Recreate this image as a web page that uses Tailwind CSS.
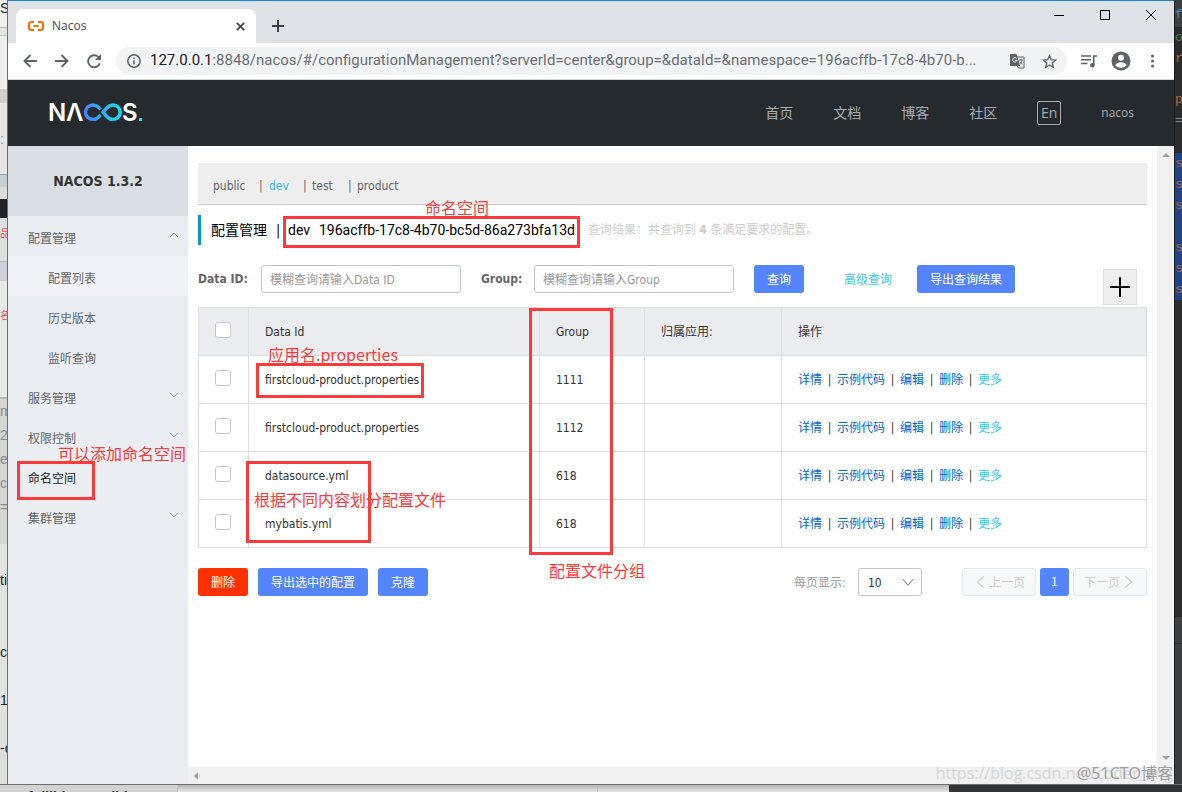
<!DOCTYPE html>
<html lang="zh-CN">
<head>
<meta charset="utf-8">
<meta name="viewport" content="width=device-width, initial-scale=1">
<title>Nacos</title>
<script src="https://cdn.jsdelivr.net/npm/@tailwindcss/browser@4"></script>
</head>
<body class="bg-[#3c3f41] text-xs text-[#333] font-['DejaVu_Sans_Condensed','Noto_Sans_CJK_SC',sans-serif]">
<svg class="hidden">
  <symbol id="down" viewBox="0 0 10 6"><path d="M1 .8 5 4.8 9 .8" fill="none" stroke="currentColor" stroke-width="1"/></symbol>
  <symbol id="up" viewBox="0 0 10 6"><path d="M1 5 5 1 9 5" fill="none" stroke="currentColor" stroke-width="1"/></symbol>
</svg>
<div class="grid h-screen grid-cols-[8px_minmax(0,1fr)_8px] grid-rows-[minmax(0,1fr)_8px] overflow-hidden">

  <!-- Window behind, left edge -->
  <div class="flex flex-col overflow-hidden border-r border-[#6e6e6e] bg-[#e6e6e6] font-['Liberation_Sans',sans-serif] text-sm leading-6 text-[#222]" aria-hidden="true">
    <div class="h-[28px] shrink-0 border-b border-[#bbb] bg-[#f0f0f0] leading-4">S</div>
    <div class="h-[8px] shrink-0 border-b border-[#ccc] bg-[#e4e4e4]"></div>
    <div class="h-[53px] shrink-0 bg-[#eee]"></div>
    <div class="h-[14px] shrink-0 bg-[#d0d0d0]"></div>
    <div class="h-[72px] shrink-0 border-b border-[#8fa8c4] bg-[#e6e6e6] pt-6 text-[#5b9bd5]">:</div>
    <div class="h-[12px] shrink-0 bg-[#c9ced5]"></div>
    <div class="h-[12px] shrink-0 bg-[#dcdcdc]"></div>
    <div class="h-[19px] shrink-0 bg-[#1f2327]"></div>
    <div class="h-[44px] shrink-0 border-b border-[#b9bbc6] bg-[#dedede] text-[10px] leading-[32px] text-[#e0565b]">品</div>
    <div class="h-[19px] shrink-0 bg-[#cfd0d6]"></div>
    <div class="h-[116px] shrink-0 bg-[#e8e8e8] text-[10px] leading-[70px] text-[#e0565b]">名</div>
    <div class="h-[147px] shrink-0 border-t-2 border-[#b8b8b8] bg-[#d6d6d6] text-[#8a8a8a]">m<br>23<br>e<br>c<br>=</div>
    <div class="h-[72px] shrink-0 bg-[#e2e2e2] pt-6">ti</div>
    <div class="h-[48px] shrink-0 bg-[#e2e2e2] pt-6">ce</div>
    <div class="h-[48px] shrink-0 bg-[#e2e2e2] pt-6">1t</div>
    <div class="grow bg-[#dedede] pt-6 whitespace-nowrap">-c</div>
  </div>

  <!-- Browser window -->
  <div class="relative flex min-w-0 flex-col border-t border-[#1a83d6] bg-white">

    <!-- Tab strip -->
    <div class="flex h-[42px] shrink-0 items-end bg-[#dee1e6]">
      <div class="ml-2 flex h-[34px] w-[240px] items-center rounded-t-lg bg-white pr-2 pl-3">
        <svg class="h-[10px] w-4 shrink-0" viewBox="0 0 16 10" fill="none" stroke="#ff6a00" stroke-width="2"><path d="M6 1H3.500Q1 1 1 3v4q0 2 2.500 2H6M10 1h2.500Q15 1 15 3v4q0 2-2.500 2H10M5.300 5h5.400"/></svg>
        <span class="ml-2 grow font-['Open_Sans',sans-serif] text-[#45484c]">Nacos</span>
        <button type="button" aria-label="关闭标签页" class="flex size-4 items-center justify-center text-[#3c4043]"><svg class="size-[9px]" viewBox="0 0 9 9" stroke="currentColor" stroke-width="1.700"><path d="m.8.800 7.400 7.400M8.200.800.800 8.200"/></svg></button>
      </div>
      <button type="button" aria-label="打开新的标签页" class="mb-[11px] ml-4 text-[#3c4043]"><svg class="size-3" viewBox="0 0 12 12" stroke="currentColor" stroke-width="2"><path d="M6 0v12M0 6h12"/></svg></button>
      <div class="mb-[23px] mr-[18px] ml-auto flex items-center gap-9 text-black">
        <button type="button" aria-label="最小化"><svg class="size-[10px]" viewBox="0 0 10 10" stroke="currentColor"><path d="M0 5.500h10"/></svg></button>
        <button type="button" aria-label="最大化"><svg class="size-[10px]" viewBox="0 0 10 10" fill="none" stroke="currentColor"><path d="M.5.500h9v9h-9z"/></svg></button>
        <button type="button" aria-label="关闭"><svg class="size-[10px]" viewBox="0 0 10 10" stroke="currentColor"><path d="m0 0 10 10M10 0 0 10"/></svg></button>
      </div>
    </div>

    <!-- Toolbar -->
    <div class="flex h-[37px] shrink-0 items-center border-b border-[#d5d7da] pr-5 pl-[15px] text-[#5f6368]">
      <button type="button" aria-label="后退" class="mr-[18px]"><svg class="size-[14px]" viewBox="0 0 14 14" fill="none" stroke="currentColor" stroke-width="1.900"><path d="M14 7H1.500M7.500 1 1.500 7l6 6"/></svg></button>
      <button type="button" aria-label="前进" class="mr-[18px]"><svg class="size-[14px]" viewBox="0 0 14 14" fill="none" stroke="currentColor" stroke-width="1.900"><path d="M0 7h12.500M6.500 1l6 6-6 6"/></svg></button>
      <button type="button" aria-label="重新加载" class="mr-[15px]"><svg class="size-[14px]" viewBox="0 0 14 14"><path d="M12.800 9.300A6 6 0 1 1 11.300 2.900L13 4.600" fill="none" stroke="currentColor" stroke-width="1.900"/><path d="M14 0v6H8z" fill="currentColor"/></svg></button>
      <div class="flex h-7 min-w-0 grow items-center rounded-full bg-[#f1f3f4] pr-[10px] pl-[11px]">
        <svg class="mr-[9px] size-[14px] shrink-0" viewBox="0 0 14 14"><circle cx="7" cy="7" r="6.200" fill="none" stroke="currentColor" stroke-width="1.500"/><path d="M6.200 6.200h1.600v4.200H6.200zM6.200 3.500h1.600V5H6.200z" fill="currentColor"/></svg>
        <span class="grow overflow-hidden font-['Roboto',sans-serif] text-[15px] whitespace-nowrap text-[#6b6f74]"><span class="text-[#202124]">127.0.0.1</span>:8848/nacos/#/configurationManagement?serverId=center&amp;group=&amp;dataId=&amp;namespace=196acffb-17c8-4b70-b...</span>
        <button type="button" aria-label="翻译此页" class="mr-[17px] shrink-0"><svg class="size-[15px]" viewBox="0 0 15 15"><path d="M7 3h7v11H8.500L7 12" fill="none" stroke="currentColor"/><path d="M1 0h5.500l1 3 2.700 9H1a1 1 0 0 1-1-1V1a1 1 0 0 1 1-1z" fill="currentColor"/><path d="M6.600 4.500A2.200 2.200 0 1 0 7 6.300H5" fill="none" stroke="#f1f3f4"/><path d="M9 6h4M11 5v1M12.300 6q-.5 2.500-2.500 4M10 7.500q1 1.800 2.600 2.800" fill="none" stroke="currentColor" stroke-width=".9"/></svg></button>
        <button type="button" aria-label="为此标签页添加书签" class="shrink-0"><svg class="size-[15px]" viewBox="0 0 15 15" fill="none" stroke="currentColor" stroke-width="1.400"><path d="m7.500 1.500 1.700 4.100 4.500.4-3.400 2.900 1 4.400-3.800-2.300-3.800 2.300 1-4.400L1.300 6l4.500-.4z"/></svg></button>
      </div>
      <button type="button" aria-label="媒体控制" class="ml-[14px] shrink-0"><svg class="h-[13px] w-4" viewBox="0 0 16 13"><path d="M0 1h10M0 4.700h10M0 8.500h6.500" stroke="currentColor" stroke-width="1.600"/><path d="M12.700 10V1H16" fill="none" stroke="currentColor" stroke-width="1.700"/><circle cx="11.300" cy="10.300" r="2.300" fill="currentColor"/></svg></button>
      <button type="button" aria-label="用户" class="ml-[14px] shrink-0"><svg class="size-5" viewBox="0 0 20 20"><circle cx="10" cy="10" r="9.500" fill="currentColor"/><circle cx="10" cy="6.800" r="3" fill="#fff"/><path d="M4.200 14.200q1.500-3 5.800-3t5.800 3Q13.500 17 10 17t-5.800-2.800z" fill="#fff"/></svg></button>
      <button type="button" aria-label="菜单" class="ml-5 shrink-0"><svg class="h-[14px] w-[3px]" viewBox="0 0 3 14" fill="currentColor"><circle cx="1.500" cy="2" r="1.500"/><circle cx="1.500" cy="7" r="1.500"/><circle cx="1.500" cy="12" r="1.500"/></svg></button>
    </div>

    <!-- Site header -->
    <header class="flex h-[66px] shrink-0 items-center bg-[#252a2f] pr-10 pl-[41px] text-sm text-[#aaadaf]">
      <svg class="h-6 w-24" viewBox="0 0 96 24" role="img" aria-label="NACOS.">
        <defs><linearGradient id="g" x1="34" x2="73" y1="0" y2="0" gradientUnits="userSpaceOnUse"><stop stop-color="#4a7cff"/><stop offset="1" stop-color="#12e4f0"/></linearGradient></defs>
        <text x="-1" y="20" fill="#fff" font-family="Inter" font-size="24" font-weight="600">N</text>
        <text x="17" y="20" fill="#fff" font-family="Inter" font-size="24" font-weight="600">Λ</text>
        <text x="73" y="20" fill="#fff" font-family="Inter" font-size="24" font-weight="600">S</text>
        <path d="M51.500 8.500 49.500 6.200Q47.200 4 43.700 4a7.200 7.200 0 0 0 0 14.400q3.500 0 5.800-2.200l2-2.300M54 11.200l4.500-5Q60.800 4 64 4a7.200 7.200 0 0 1 0 14.400q-3.200 0-5.500-2.200z" fill="none" stroke="url(#g)" stroke-width="3.400"/>
        <path d="M90 17h3v3h-3z" fill="#12e4f0"/>
      </svg>
      <nav class="ml-auto flex items-center gap-10">
        <a href="#">首页</a><a href="#">文档</a><a href="#">博客</a><a href="#">社区</a>
        <button type="button" class="flex size-6 items-center justify-center rounded-xs border border-[#aaadaf] font-['Open_Sans',sans-serif] text-sm">En</button>
        <a href="#" class="font-['Open_Sans',sans-serif] text-xs">nacos</a>
      </nav>
    </header>

    <div class="flex min-h-0 grow">
      <!-- Sidebar -->
      <aside class="w-[180px] shrink-0 bg-[#eaedf1] text-[#666]">
        <h1 class="flex h-[70px] items-center justify-center bg-[#d9dde4] text-sm font-bold text-[#333]">NACOS 1.3.2</h1>
        <nav class="leading-[40px]">
          <button type="button" class="flex h-10 w-full items-center justify-between pt-[6px] pr-[9px] pl-5">配置管理<svg class="mb-2 h-[6px] w-[10px] text-[#888]"><use href="#up"/></svg></button>
          <a href="#" class="block h-10 bg-[#f1f3f8] pt-[3px] pl-10">配置列表</a>
          <a href="#" class="block h-10 pt-[3px] pl-10">历史版本</a>
          <a href="#" class="block h-10 pt-[3px] pl-10">监听查询</a>
          <button type="button" class="flex h-10 w-full items-center justify-between pt-[6px] pr-[9px] pl-5">服务管理<svg class="mb-2 h-[6px] w-[10px] text-[#888]"><use href="#down"/></svg></button>
          <button type="button" class="flex h-10 w-full items-center justify-between pt-[6px] pr-[9px] pl-5">权限控制<svg class="mb-2 h-[6px] w-[10px] text-[#888]"><use href="#down"/></svg></button>
          <a href="#" class="block h-10 pt-[3px] pl-5 text-[#222]">命名空间</a>
          <button type="button" class="flex h-10 w-full items-center justify-between pt-[6px] pr-[9px] pl-5">集群管理<svg class="mb-2 h-[6px] w-[10px] text-[#888]"><use href="#down"/></svg></button>
        </nav>
      </aside>

      <div class="flex min-w-0 grow flex-col">
        <main class="min-h-0 grow px-[10px] pt-[17px]">
          <nav class="flex h-[42px] items-center border-b border-[#ccc] bg-[#eee] pt-1 pl-[15px] text-[#666]">
            <a href="#" class="w-[46px]">public</a><span class="w-[10px]">|</span><a href="#" class="w-[34px] text-[#2bbcd8]">dev</a><span class="w-[9px]">|</span><a href="#" class="w-[36px]">test</a><span class="w-[9px]">|</span><a href="#">product</a>
          </nav>

          <h2 class="mt-[10px] flex h-[30px] items-center border-l-3 border-[#09c] pl-[10px] text-sm text-black">
            <span class="w-[65px]">配置管理</span><span class="w-3">|</span><span class="w-[31px] font-['Roboto','Noto_Sans_CJK_SC',sans-serif]">dev</span><span class="font-['Roboto',sans-serif]">196acffb-17c8-4b70-bc5d-86a273bfa13d</span>
            <span class="ml-[13px] text-xs whitespace-nowrap text-[#ccc]">查询结果：共查询到 <strong>4</strong> 条满足要求的配置。</span>
          </h2>

          <form class="mt-5 flex items-center text-[#666]">
            <label for="data-id" class="w-[63px] font-bold whitespace-nowrap">Data ID:</label>
            <input id="data-id" placeholder="模糊查询请输入Data ID" class="h-7 w-[200px] rounded-[3px] border border-[#c4c6cf] bg-white px-2 pt-[2px] placeholder:text-[#999]">
            <label for="group" class="ml-5 w-[53px] font-bold whitespace-nowrap">Group:</label>
            <input id="group" placeholder="模糊查询请输入Group" class="h-7 w-[200px] rounded-[3px] border border-[#c4c6cf] bg-white px-2 pt-[2px] placeholder:text-[#999]">
            <button type="button" class="ml-5 h-7 w-[50px] rounded-[3px] bg-[#5584ff] pt-[2px] text-white">查询</button>
            <a href="#" class="ml-10 pt-[2px] text-[#33cde5]">高级查询</a>
            <button type="button" class="ml-[25px] h-7 rounded-[3px] bg-[#5584ff] px-[13px] pt-[2px] text-white">导出查询结果</button>
            <button type="button" aria-label="新建配置" class="mr-[10px] -mb-4 ml-auto flex h-9 w-[34px] items-center justify-center border border-[#ddd] bg-[#eee] text-black"><svg class="size-5" viewBox="0 0 20 20" stroke="currentColor" stroke-width="2"><path d="M10 0v20M0 10h20"/></svg></button>
          </form>

          <table class="mt-[14px] w-full table-fixed border-collapse text-left text-[#333] [&_td]:border [&_td]:border-[#dcdee3] [&_td]:px-4 [&_th]:border [&_th]:border-[#dcdee3] [&_th]:px-4 [&_th]:font-normal [&_tr]:h-12">
            <colgroup><col class="w-[50px]"><col class="w-[291px]"><col class="w-[105px]"><col class="w-[137px]"><col></colgroup>
            <thead class="bg-[#ebecf0]">
              <tr><th><input type="checkbox" aria-label="全选" class="mb-[3px] block size-4 appearance-none rounded-[3px] border border-[#c4c6cf] bg-white"></th><th>Data Id</th><th>Group</th><th>归属应用:</th><th>操作</th></tr>
            </thead>
            <tbody id="rows"></tbody>
          </table>

          <div class="mt-5 flex items-center">
            <button type="button" class="h-7 w-[50px] rounded-[3px] bg-[#ff3000] pt-[2px] text-white">删除</button>
            <button type="button" class="ml-[10px] h-7 rounded-[3px] bg-[#5584ff] px-[13px] pt-[2px] text-white">导出选中的配置</button>
            <button type="button" class="ml-[10px] h-7 w-[50px] rounded-[3px] bg-[#5584ff] pt-[2px] text-white">克隆</button>
            <label for="size" class="ml-auto w-16 pt-[2px] text-[#999]">每页显示:</label>
            <span class="relative block">
              <select id="size" class="h-7 w-16 appearance-none rounded-[3px] border border-[#c4c6cf] bg-white pt-[2px] pl-[9px] text-[#333]"><option>10</option></select>
              <svg class="pointer-events-none absolute top-[10px] right-2 h-2 w-3 text-[#888]" viewBox="0 0 12 8"><path d="m.5 1 5.500 6 5.500-6" fill="none" stroke="currentColor" stroke-width="1.100"/></svg>
            </span>
            <button type="button" disabled class="ml-10 flex h-7 w-[74px] items-center gap-1 rounded-[3px] border border-[#e6e7eb] bg-[#f7f8fa] px-3 whitespace-nowrap text-[#ccc]"><svg class="h-3 w-[10px] shrink-0" viewBox="0 0 10 12"><path d="M8.500.500 2.500 6l6 5.500" fill="none" stroke="currentColor" stroke-width="1.200"/></svg><span class="pt-[2px]">上一页</span></button>
            <button type="button" class="ml-1 h-7 w-[29px] rounded-[3px] bg-[#5584ff] text-white">1</button>
            <button type="button" disabled class="ml-1 flex h-7 w-[74px] items-center gap-1 rounded-[3px] border border-[#e6e7eb] bg-[#f7f8fa] px-[10px] whitespace-nowrap text-[#ccc]"><span class="pt-[2px]">下一页</span><svg class="h-3 w-[10px] shrink-0" viewBox="0 0 10 12"><path d="m1.500.500 6 5.500-6 5.500" fill="none" stroke="currentColor" stroke-width="1.200"/></svg></button>
          </div>
        </main>
        <!-- Horizontal scrollbar -->
        <div class="flex h-[17px] shrink-0 items-center justify-between bg-[#f0f0f0] px-[6px] text-[#a3a3a3]" aria-hidden="true">
          <svg class="h-2 w-1" viewBox="0 0 4 8" fill="currentColor"><path d="M4 0v8L0 4z"/></svg>
          <svg class="h-2 w-1" viewBox="0 0 4 8" fill="currentColor"><path d="M0 0v8l4-4z"/></svg>
        </div>
      </div>
      <!-- Vertical scrollbar -->
      <div class="flex w-[17px] shrink-0 flex-col items-center justify-between bg-[#f0f0f0] pt-[7px] pb-6 text-[#a3a3a3]" aria-hidden="true">
        <svg class="h-1 w-2" viewBox="0 0 8 4" fill="currentColor"><path d="M0 4h8L4 0z"/></svg>
        <svg class="h-1 w-2" viewBox="0 0 8 4" fill="currentColor"><path d="M0 0h8L4 4z"/></svg>
      </div>
    </div>

    <!-- Red annotations drawn over the window -->
    <div class="pointer-events-none absolute inset-0 text-base leading-6 whitespace-nowrap text-[#fd3a3a] font-['Noto_Sans_CJK_SC',sans-serif]">
      <div class="absolute top-[215px] left-[275px] h-8 w-[297px] border-3"></div>
      <div class="absolute top-[362px] left-[248px] h-[35px] w-[168px] border-3"></div>
      <div class="absolute top-[307px] left-[521px] h-[247px] w-[84px] border-3"></div>
      <div class="absolute top-[460px] left-[238px] h-[82px] w-[125px] border-3"></div>
      <div class="absolute top-[460px] left-[9px] h-[39px] w-[78px] border-3"></div>
      <p class="absolute top-[194px] left-[417px]">命名空间</p>
      <p class="absolute top-[341px] left-[260px]">应用名.properties</p>
      <p class="absolute top-[440px] left-[50px]">可以添加命名空间</p>
      <p class="absolute top-[486px] left-[246px]">根据不同内容划分配置文件</p>
      <p class="absolute top-[557px] left-[541px]">配置文件分组</p>
    </div>
    <!-- Watermarks -->
    <div class="pointer-events-none absolute right-0 bottom-0 font-['Open_Sans','Noto_Sans_CJK_SC',sans-serif] text-base leading-6 whitespace-nowrap">
      <p class="absolute right-[1px] bottom-[-1px] text-[#cfcfcf]/80">https://blog.csdn.net/coder_ang</p>
      <p class="absolute right-[1px] bottom-[-1px] text-[#8c8c8c]/80">@51CTO博客</p>
    </div>
  </div>

  <!-- Editor behind, right edge -->
  <div class="flex flex-col overflow-hidden border-l border-[#1d1d1d] bg-[#2b2b2b] font-['Liberation_Mono',monospace] text-[13px] leading-[21px] text-[#b0673a]" aria-hidden="true">
    <div class="h-[27px] shrink-0 bg-[#3c3f41] pt-1 text-[#4f86c0]">fr</div>
    <div class="h-[126px] shrink-0"><p class="text-[#587a50]">ou</p><p>r</p><p class="mt-5">pa</p><p class="text-[#888]">=1</p></div>
    <div class="h-[147px] shrink-0 bg-[#214283] text-[#a86a4c]">s:<br>s:<br>s:<br><br>s:<br>s:<br>s:</div>
    <div class="h-[317px] shrink-0"></div>
    <div class="h-[27px] shrink-0 border-b border-[#2b2b2b] bg-[#3c3f41]"></div>
    <div class="grow bg-[#3c3f41]"></div>
  </div>

  <!-- Windows behind, bottom edge -->
  <div class="col-span-3 flex overflow-hidden border-t border-[#6e6e6e] font-['Liberation_Sans',sans-serif] text-sm leading-4 font-bold text-[#222]" aria-hidden="true">
    <div class="w-[178px] shrink-0 border-r border-[#c4c4c4] bg-[#d2d2d2] pt-1 pl-7">fuilliti— ——litl</div>
    <div class="w-[420px] shrink-0 border-r border-[#bbb] bg-linear-to-b from-[#b5b5b5] to-[#e8e8e8]"></div>
    <div class="w-[351px] shrink-0 bg-linear-to-b from-[#b5b5b5] to-[#e8e8e8]"></div>
    <div class="grow bg-[#323537]"></div>
  </div>
</div>

<script>
  const rows = [
    ['firstcloud-product.properties', '1111'],
    ['firstcloud-product.properties', '1112'],
    ['datasource.yml', '618'],
    ['mybatis.yml', '618'],
  ];
  const sep = '<span class="inline-block w-[15px] text-center">|</span>';
  document.getElementById('rows').innerHTML = rows.map(([id, group]) => `
    <tr>
      <td><input type="checkbox" aria-label="${id}" class="mb-[3px] block size-4 appearance-none rounded-[3px] border border-[#c4c6cf] bg-white"></td>
      <td>${id}</td><td>${group}</td><td></td>
      <td class="whitespace-nowrap">${['详情', '示例代码', '编辑', '删除'].map(t => `<a href="#" class="text-[#0064d0]">${t}</a>${sep}`).join('')}<a href="#" class="text-[#33cde5]">更多</a></td>
    </tr>`).join('');
</script>
</body>
</html>
